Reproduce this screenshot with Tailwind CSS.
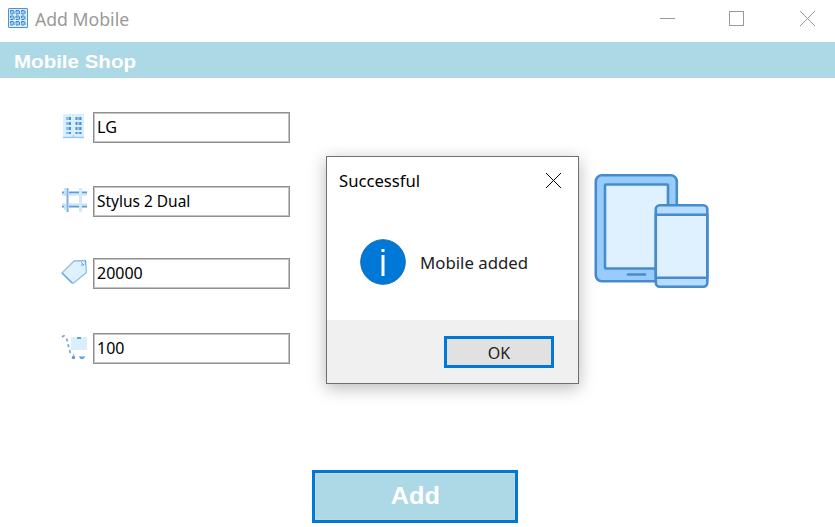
<!DOCTYPE html>
<html lang="en">
<head>
<meta charset="utf-8">
<title>Add Mobile</title>
<script src="https://cdn.jsdelivr.net/npm/@tailwindcss/browser@4"></script>
</head>
<body class="relative flex h-[527px] w-[835px] flex-col overflow-hidden bg-white font-['Noto_Sans',sans-serif] text-black">
  <header class="flex h-[42px] shrink-0 items-center pl-2">
    <svg class="mb-[6px] h-5 w-5" viewBox="0 0 20 20" fill="none">
      <rect x=".5" y=".5" width="19" height="19" rx=".5" fill="#d9eefe" stroke="#4f92d0"/>
      <g fill="#98ccfd" stroke="#3f83c6" stroke-dasharray="3 1">
        <rect x="2.500" y="2.500" width="3.500" height="3.500"/><rect x="8" y="2.500" width="3.500" height="3.500"/><rect x="13.500" y="2.500" width="3.500" height="3.500"/>
        <rect x="2.500" y="8" width="3.500" height="3.500"/><rect x="8" y="8" width="3.500" height="3.500"/><rect x="13.500" y="8" width="3.500" height="3.500"/>
        <rect x="2.500" y="13.500" width="3.500" height="3.500"/><rect x="8" y="13.500" width="3.500" height="3.500"/><rect x="13.500" y="13.500" width="3.500" height="3.500"/>
      </g>
    </svg>
    <span class="ml-[7px] mb-[5px] origin-left scale-x-[.98] text-[18px] leading-6 whitespace-nowrap text-[#999]">Add Mobile</span>
    <div class="mr-5 mb-[5px] ml-auto flex items-center text-[#999]">
      <svg class="h-[15px] w-[15px]" viewBox="0 0 15 15" stroke="currentColor"><path d="M0 7.500H15"/></svg>
      <svg class="ml-[54px] h-[15px] w-[15px]" viewBox="0 0 15 15" fill="none" stroke="currentColor"><rect x=".5" y=".5" width="14" height="14"/></svg>
      <svg class="ml-14 h-[15px] w-[15px]" viewBox="0 0 15 15" stroke="currentColor"><path d="M0 0L15 15M15 0L0 15"/></svg>
    </div>
  </header>
  <div class="flex h-9 shrink-0 items-center bg-[#add8e6] pl-[14px]">
    <h1 class="mt-[3px] origin-left scale-x-[1.14] font-['Liberation_Sans',sans-serif] text-[18px] leading-6 font-bold whitespace-nowrap text-white">Mobile Shop</h1>
  </div>
  <main class="flex grow flex-col items-center">
    <div class="flex h-[392px] w-full items-start">
      <form class="w-[290px] pt-[34px] pl-[61px] text-[17px]">
        <label class="flex h-[31px] items-center">
          <svg class="mb-1 h-[26px] w-[26px]" viewBox="0 0 26 26" fill="none">
            <path d="M2 1H23V25H2Z" fill="#d9eefe"/><path d="M2 24.500H23M12.500 22V25" stroke="#9acbf6" stroke-width="1.500"/>
            <g stroke="#8cbeed" stroke-width="3" stroke-dasharray="3 2"><path d="M6.500 4V21M18.500 4V21"/></g>
            <g stroke="#4f8fcb" stroke-width="2" stroke-dasharray="3 2"><path d="M9 4V21M15.500 4V21M19.500 4V21"/></g>
          </svg>
          <span class="ml-[6px] flex h-[31px] w-[197px] items-center border-[1px] border-[#8f8f8f] bg-white pb-[2px] pl-[3px] shadow-[inset_0_0_0_1px_#c4c4c4]"><span class="origin-left scale-x-[.95] whitespace-nowrap">LG</span></span>
        </label>
        <label class="mt-[43px] flex h-[31px] items-center">
          <svg class="mb-[3px] h-[26px] w-[26px]" viewBox="0 0 26 26" fill="none" stroke-width="2">
            <path d="M6.500 1V25" stroke="#78aee0"/><path d="M19.500 1V25" stroke="#d4eafc" stroke-width="3"/>
            <path d="M1 5.500H5M8 5.500H18M21 5.500H26M1 19.500H5M8 19.500H18M21 19.500H26" stroke="#5d9ad3"/>
            <path d="M1 7.500H5M8 7.500H18M21 7.500H26M1 17.500H5M8 17.500H18M21 17.500H26M4 1V9M4 17V23" stroke="#c5e2fb"/>
          </svg>
          <span class="ml-[6px] flex h-[31px] w-[197px] items-center border-[1px] border-[#8f8f8f] bg-white pb-[2px] pl-[3px] shadow-[inset_0_0_0_1px_#c4c4c4]"><span class="origin-left scale-x-[.91] whitespace-nowrap">Stylus 2 Dual</span></span>
        </label>
        <label class="mt-[41px] flex h-[31px] items-center">
          <svg class="mb-[3px] h-[26px] w-[26px]" viewBox="0 0 26 26" fill="none">
            <path d="M13 2L24.500 1.500L25.500 13.500L12 24.500L1 14Z" fill="#dff0fe" stroke="#91bde5" stroke-width="1.300" stroke-linejoin="round"/>
            <path d="M20 3L23 6M24.500 1.500V6M20 6H23" stroke="#67a2d8"/>
            <path d="M1 14L11 24" stroke="#6da6da" stroke-width="1.300"/>
          </svg>
          <span class="ml-[6px] flex h-[31px] w-[197px] items-center border-[1px] border-[#8f8f8f] bg-white pb-[2px] pl-[3px] shadow-[inset_0_0_0_1px_#c4c4c4]"><span class="origin-left scale-x-[.94] whitespace-nowrap">20000</span></span>
        </label>
        <label class="mt-[44px] flex h-[31px] items-center">
          <svg class="mb-[3px] h-[26px] w-[26px]" viewBox="0 0 26 26" fill="none">
            <path d="M10 3H26V16H10Z" fill="#d9eefe"/><path d="M16 4H20" stroke="#4285c4" stroke-width="1.500"/>
            <path d="M1 3Q4 .5 5.500 4L9 18Q11 21 13 21" stroke="#72a8dc" stroke-width="1.700" stroke-dasharray="3 3"/>
            <circle cx="12.500" cy="23.500" r="1.700" fill="#5d9ad3"/><path d="M19 23Q21 25.500 23 23" stroke="#5d9ad3" stroke-width="2"/><path d="M18 22.500H24" stroke="#9acbf6"/>
          </svg>
          <span class="ml-[6px] flex h-[31px] w-[197px] items-center border-[1px] border-[#8f8f8f] bg-white pb-[2px] pl-[3px] shadow-[inset_0_0_0_1px_#c4c4c4]"><span class="origin-left scale-x-[.94] whitespace-nowrap">100</span></span>
        </label>
      </form>
      <svg class="mt-[95px] ml-[304px] h-[117px] w-[116px]" viewBox="0 0 116 117" fill="none" stroke="#478bcb" stroke-width="2.600">
        <rect x="1.800" y="2.300" width="81" height="106" rx="6" fill="#98ccfd"/>
        <rect x="11" y="11.500" width="63" height="84" rx="1" fill="#dff0fe"/>
        <path d="M34 101.500H51" stroke-linecap="round"/>
        <rect x="61.800" y="32.300" width="51.500" height="81.500" rx="4" fill="#b6dcfe"/>
        <path d="M61.800 41.800H113.300V104.800H61.800Z" fill="#dff0fe"/>
      </svg>
    </div>
    <button class="mr-[5px] flex h-[53px] w-[206px] items-center justify-center border-[3px] border-[#0078d7] bg-[#add8e6] pb-[1px] font-['Liberation_Sans',sans-serif] text-[24px] leading-6 font-bold text-white shadow-[inset_0_0_0_1px_#c9d5d9]"><span class="scale-x-105">Add</span></button>
  </main>
  <section role="dialog" aria-label="Successful" class="absolute top-[156px] left-[326px] flex h-[228px] w-[253px] flex-col border border-[#707070] bg-white shadow-[0_4px_16px_rgba(0,0,0,.28)]">
    <div class="flex h-[47px] items-center pl-3">
      <span class="origin-left scale-x-[.98] text-[17px] leading-6 whitespace-nowrap">Successful</span>
      <svg class="mr-[17px] ml-auto h-[15px] w-[15px]" viewBox="0 0 15 15" stroke="black"><path d="M0 0L15 15M15 0L0 15"/></svg>
    </div>
    <div class="flex h-[116px] items-center pl-[33px]">
      <svg class="mb-[1px] h-[46px] w-[46px]" viewBox="0 0 46 46"><circle cx="23" cy="23" r="22.300" fill="#0078d7" stroke="#126ab2"/><path d="M21.500 10H24.500V13H21.500ZM21.500 16H24.500V37H21.500Z" fill="white"/></svg>
      <span class="mt-[1px] ml-[14px] origin-left scale-x-[1.05] text-[16px] leading-6 whitespace-nowrap text-[#222]">Mobile added</span>
    </div>
    <div class="flex grow items-center justify-end bg-[#f0f0f0] pr-6">
      <button class="flex h-8 w-[110px] items-center justify-center border-[3px] border-[#0078d7] bg-[#e1e1e1] pt-[2px] text-[16px] leading-6 text-[#222]">OK</button>
    </div>
  </section>
</body>
</html>
